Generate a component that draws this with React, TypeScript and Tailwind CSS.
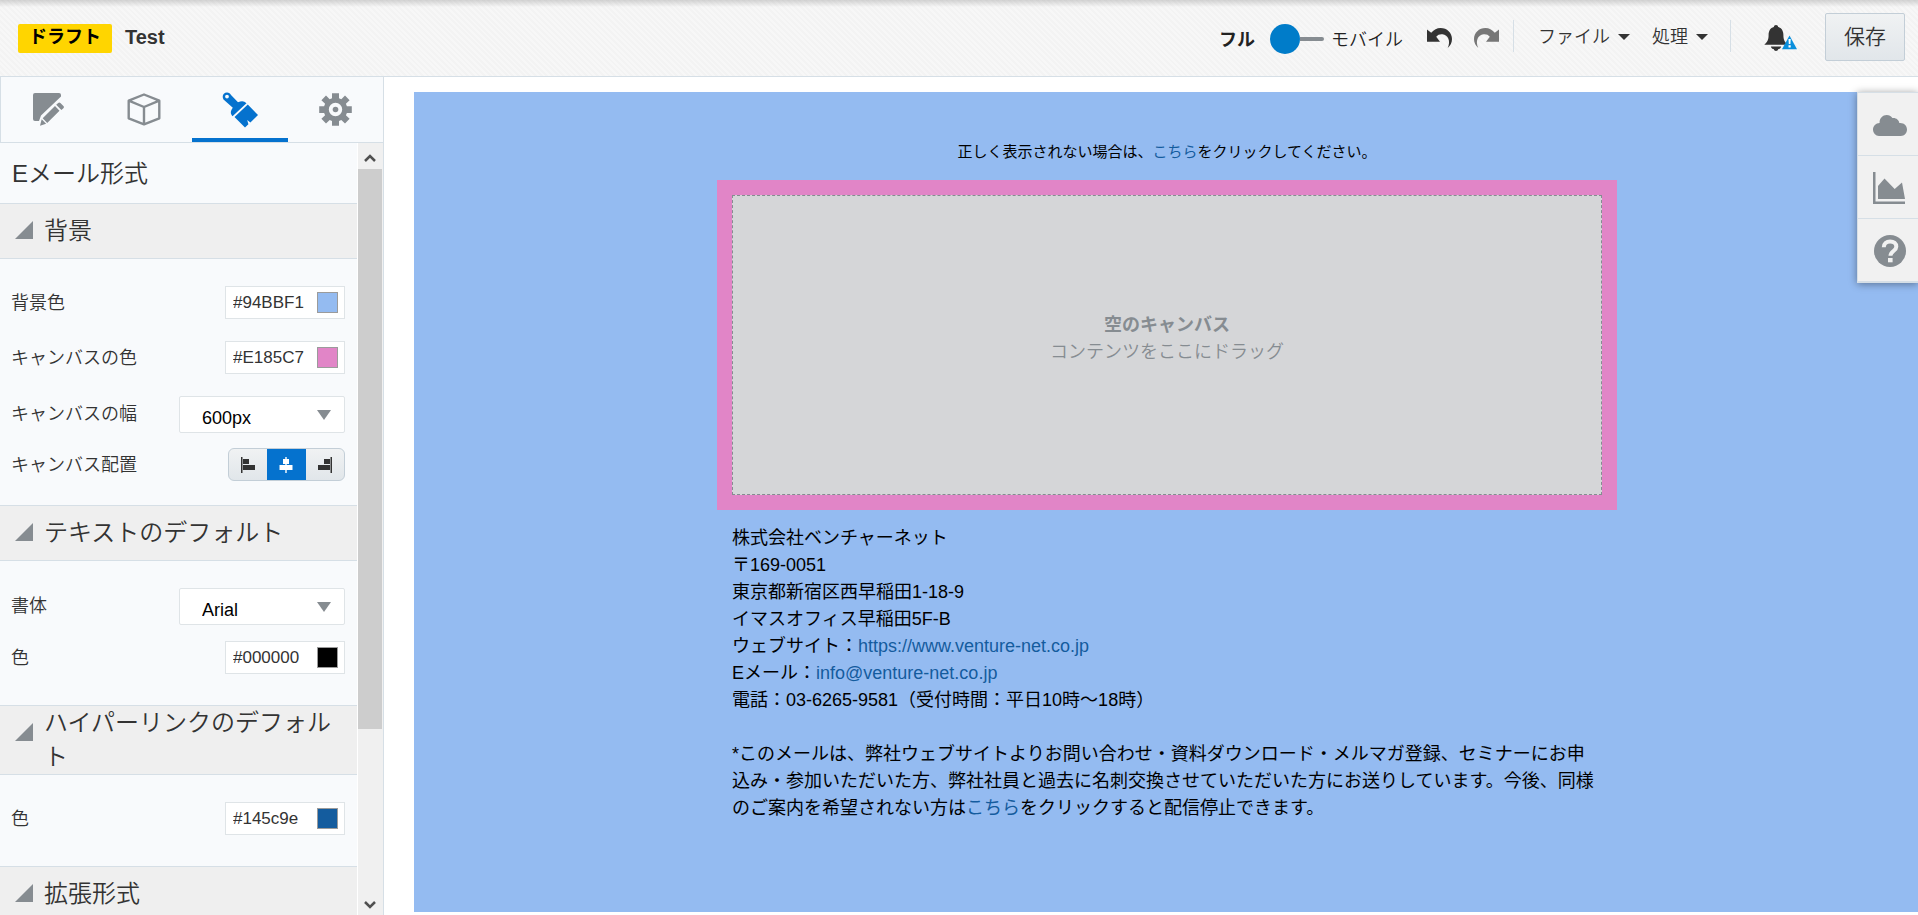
import { ReactNode, useState } from "react";

interface ColorFieldProps {
  id: string;
  label: string;
  value: string;
}

interface SelectFieldProps {
  id: string;
  label: string;
  options: string[];
}

interface SectionProps {
  title: string;
  children?: ReactNode;
}

const PencilIcon = () => (
  <svg width="32" height="33" viewBox="0 0 32 33" fill="currentColor" aria-hidden="true">
    <path d="M2 0h24a2 2 0 0 1 2 2v1.500L8 22.500 6 28H2a2 2 0 0 1-2-2V2a2 2 0 0 1 2-2z" />
    <path d="M9.700 25.200l12.300-12.200 4.500 4.700-12.300 12.200zM23.200 11.800l2-1.900c.7-.7 1.500-.7 2.200 0l3 3.200c.7.7.7 1.500 0 2.200l-2 1.800zM8.700 26.300l4.400 4.400L7 32.700z" />
  </svg>
);

const CubeIcon = () => (
  <svg width="34" height="33" viewBox="0 0 34 33" fill="none" stroke="currentColor" strokeWidth="2.400" strokeLinejoin="round" aria-hidden="true">
    <path d="M17 1.500l15.300 6.200v17.600L17 31.300 1.700 25.300V7.700zM1.700 7.700L17 14l15.300-6.300M17 14v17.300" />
  </svg>
);

const BrushIcon = () => (
  <svg width="36" height="36" viewBox="0 0 36 36" fill="currentColor" aria-hidden="true">
    <path fillRule="evenodd" d="M1.500 7.500C-.5 4 1.500.5 5 .5c2 0 3.300 1 4 2.600l7 7.200c3.500-1.700 6-1.700 8.500 1L10.500 24.200C8 21.500 8.500 19 10.800 15.800zM5 2.700a1.900 1.900 0 1 0 0 3.800 1.900 1.900 0 0 0 0-3.800z" />
    <path d="M25.800 12.600L36 23l-7.600 7.600-3.200-2.700 1.200 4.400L23 35.500 12.500 25z" />
  </svg>
);

const GearIcon = () => (
  <svg width="33" height="33" viewBox="-16.500 -16.500 33 33" fill="currentColor" aria-hidden="true">
    <path
      fillRule="evenodd"
      d="M-3.500-16.300h7v5l2.300 1 3.700-3.600 4.600 4.600-3.700 3.600 1 2.400h4.900v6.700h-4.900l-1 2.300 3.700 3.600-4.600 4.700-3.700-3.600-2.300 1v4.900h-7v-4.900l-2.300-1-3.700 3.600-4.600-4.700 3.700-3.600-1-2.300h-4.900v-6.700h4.900l1-2.400-3.700-3.600 4.600-4.600 3.700 3.600 2.300-1zM0-6.700A6.700 6.700 0 1 0 0 6.700 6.700 6.700 0 0 0 0-6.700z"
    />
    <circle r="2.800" />
  </svg>
);

const UndoIcon = ({ flip }: { flip?: boolean }) => (
  <svg width="25" height="20" viewBox="0 0 25 20" fill="currentColor" className={flip ? "-scale-x-100" : ""} aria-hidden="true">
    <path d="M0 1.500l4.200 3.300C7 1.800 10 0 13.500 0 20 0 25 4.800 25 11c0 3.500-1.500 6.500-4.300 9C24 13 21 7 15.500 6.300c-2.600-.3-4.700.5-6.300 2.400L13 13.800H0z" />
  </svg>
);

const BellIcon = () => (
  <svg width="33" height="27" viewBox="0 0 33 27" aria-hidden="true">
    <path d="M12 0c1.300 0 2 .8 2.200 2 3.400.9 5.200 4 5.200 8 0 4.800 1.300 7 4.300 9.800H.3C3.300 17 4.600 14.800 4.600 10c0-4 1.800-7.100 5.200-8C10 .8 10.700 0 12 0zM6.800 21.500h10.400c-.6 2-1.800 2.500-2.800 2.600-.4 1.200-1.300 1.900-2.400 1.900s-2-.7-2.400-1.900c-1-.1-2.200-.6-2.800-2.600z" fill="#333" />
    <path d="M25.500 10.500L33 24.300H18z" fill="#0a8fdc" />
    <path d="M24.500 14h2.200l-.3 5h-1.600zM24.500 20.300h2.200v2.200h-2.200z" fill="#fff" />
  </svg>
);

const CloudIcon = () => (
  <svg width="34" height="21" viewBox="0 0 34 21" fill="currentColor" aria-hidden="true">
    <path d="M6 21A6.300 6.300 0 0 1 0 14.500C0 11 2.800 8 6.600 8 6.300 3.500 9.500 0 13.700 0c2.500 0 4.400 1.100 5.700 3 3.300-.6 6.600 1.700 6.900 5C30.800 7.500 34 10.500 34 14.500c0 3.600-2.600 6.500-6.200 6.500z" />
  </svg>
);

const ChartIcon = () => (
  <svg width="33" height="32" viewBox="0 0 33 32" fill="currentColor" aria-hidden="true">
    <path d="M0 0h2.500v29.500H32V32H0zM5 27V14l6.500-7.500L21.700 17l7.300-6.500L32 27z" />
  </svg>
);

const HelpIcon = () => (
  <svg width="32" height="32" viewBox="0 0 32 32" aria-hidden="true">
    <circle cx="16" cy="16" r="16" fill="currentColor" />
    <path d="M9.800 12.300c0-3.800 2.600-5.800 6.300-5.800 3.800 0 6.200 2 6.200 5.200 0 4.300-5.800 4.300-5.800 9" fill="none" stroke="#f1f1f1" strokeWidth="4" />
    <path d="M14 23h4.600v4.300H14z" fill="#f1f1f1" />
  </svg>
);

const AlignLeftIcon = () => (
  <svg width="15" height="16" viewBox="0 0 15 16" fill="currentColor" aria-hidden="true">
    <path d="M0 0h1.500v16H0zM2 2h6v5H2zM2 8h12v5H2z" />
  </svg>
);

const AlignCenterIcon = () => (
  <svg width="14" height="16" viewBox="0 0 14 16" fill="currentColor" aria-hidden="true">
    <path d="M6.300 0h1.400v16H6.300zM4 2h6v5H4zM.5 8h13v5H.5z" />
  </svg>
);

const AlignRightIcon = () => (
  <svg width="15" height="16" viewBox="0 0 15 16" fill="currentColor" aria-hidden="true">
    <path d="M13.500 0H15v16h-1.500zM7 2h6v5H7zM1 8h12v5H1z" />
  </svg>
);

const Caret = () => (
  <svg width="12" height="6" viewBox="0 0 12 6" fill="currentColor" aria-hidden="true">
    <path d="M0 0h12L6 6z" />
  </svg>
);

const tabs = [
  { name: "編集", icon: <PencilIcon /> },
  { name: "ブロック", icon: <CubeIcon /> },
  { name: "スタイル", icon: <BrushIcon /> },
  { name: "設定", icon: <GearIcon /> },
];

const alignments = [
  { name: "左", icon: <AlignLeftIcon /> },
  { name: "中央", icon: <AlignCenterIcon /> },
  { name: "右", icon: <AlignRightIcon /> },
];

const tools = [
  { name: "クラウド", icon: <CloudIcon /> },
  { name: "レポート", icon: <ChartIcon /> },
  { name: "ヘルプ", icon: <HelpIcon /> },
];

const ColorField = ({ id, label, value }: ColorFieldProps) => {
  const [color, setColor] = useState(value);
  return (
    <div className="flex items-center justify-between">
      <label htmlFor={id}>{label}</label>
      <div className="flex h-[33px] w-[120px] items-center border border-[#dfe4e7] bg-white pl-[7px] pr-1.5">
        <input
          id={id}
          value={color}
          onChange={(e) => setColor(e.target.value)}
          className="min-w-0 flex-1 bg-transparent pt-0.5 text-[17px] outline-none"
        />
        <span className="size-[21px] border border-[#9b9b9b]" style={{ backgroundColor: color }} />
      </div>
    </div>
  );
};

const SelectField = ({ id, label, options }: SelectFieldProps) => {
  return (
    <div className="flex items-center justify-between">
      <label htmlFor={id} className="pb-0.5">{label}</label>
      <div className="grid w-[166px] items-center">
        <select
          id={id}
          className="col-start-1 row-start-1 h-[37px] appearance-none rounded-xs border border-[#dfe4e7] bg-white pl-[22px] pt-1.5 text-lg text-black"
        >
          {options.map((option) => (
            <option key={option}>{option}</option>
          ))}
        </select>
        <svg width="14" height="10" viewBox="0 0 14 10" className="pointer-events-none col-start-1 row-start-1 mr-3.5 justify-self-end" aria-hidden="true">
          <path d="M0 0h14L7 10z" fill="#868c91" />
        </svg>
      </div>
    </div>
  );
};

const Section = ({ title, children }: SectionProps) => {
  return (
    <section>
      <div className="flex min-h-[55px] items-start gap-[11px] border-b border-[#d6dfe6] bg-[#efefef] pl-[15px] pr-5">
        <svg width="18" height="18" viewBox="0 0 18 18" className="mt-[17px] shrink-0" aria-hidden="true">
          <path d="M18 0v18H0z" fill="#868c91" />
        </svg>
        <h2 className="self-center text-2xl leading-[34px] font-[350]">{title}</h2>
      </div>
      {children}
    </section>
  );
};

const Header = () => {
  return (
    <header className="flex h-[77px] shrink-0 items-start justify-between border-b border-[#d6dfe6] bg-[linear-gradient(#00000026,transparent_7px),repeating-linear-gradient(45deg,#f7f7f7_0_2px,#f3f3f3_2px_4px)] pl-[18px] pr-[13px] text-lg leading-7">
      <div className="flex gap-[13px] pt-6 font-bold">
        <span className="h-[29px] rounded-xs bg-[#ffd500] px-[11px] leading-[26px] text-black">ドラフト</span>
        <h1 className="text-xl leading-[26px]">Test</h1>
      </div>
      <div className="flex">
        <div className="flex items-center self-start pt-6 text-[#222]">
          <span className="pt-0.5 font-bold">フル</span>
          <button type="button" role="switch" aria-checked="false" aria-label="フル / モバイル" className="ml-[15px] flex items-center">
            <span className="size-[30px] rounded-full bg-[#007cc9]" />
            <span className="h-1 w-6 rounded-r-full bg-[#868c91]" />
          </button>
          <span className="ml-[7px] pt-0.5 font-[350]">モバイル</span>
        </div>
        <button type="button" aria-label="元に戻す" className="mt-7 ml-6 self-start text-[#333]"><UndoIcon /></button>
        <button type="button" aria-label="やり直し" className="mt-7 ml-[22px] self-start text-[#777]"><UndoIcon flip /></button>
        <nav className="mt-5 ml-3.5 flex h-8 gap-[22px] border-x border-[#d6dfe6] pr-[22px] pl-6 font-[350] text-[#333]">
          <button type="button" className="flex items-center gap-2 pt-px">ファイル<Caret /></button>
          <button type="button" className="flex items-center gap-2 pt-px">処理<Caret /></button>
        </nav>
        <button type="button" aria-label="通知" className="mt-[25px] ml-[33px] self-start"><BellIcon /></button>
        <button type="button" className="mt-[13px] ml-7 h-12 w-20 rounded-xs border border-[#c3ced7] bg-linear-to-b from-[#f0f2f3] to-[#e1e6ea] text-[21px] font-[350]">
          保存
        </button>
      </div>
    </header>
  );
};

const Sidebar = () => {
  return (
    <aside className="flex w-96 shrink-0 flex-col border-r border-[#d6dfe6] bg-[#f8fafc]">
      <div role="tablist" className="flex h-[66px] shrink-0 border-b border-l border-[#d6dfe6] text-[#868c91]">
        {tabs.map((tab, i) => (
          <button
            key={tab.name}
            type="button"
            role="tab"
            aria-selected={i === 2}
            aria-label={tab.name}
            className={
              i === 2
                ? "flex flex-1 items-center justify-center border-b-4 border-[#0572ce] pt-1 text-[#0572ce]"
                : "flex flex-1 items-center justify-center"
            }
          >
            {tab.icon}
          </button>
        ))}
      </div>
      <div className="flex min-h-0 flex-1">
        <div className="min-w-0 flex-1 overflow-hidden border-r border-white text-lg">
          <h2 className="border-b border-[#d6dfe6] px-3 pt-3.5 pb-3 text-2xl leading-[34px] font-[350]">Eメール形式</h2>
          <Section title="背景">
            <div className="flex flex-col gap-[22px] border-b border-[#d6dfe6] pt-[27px] pr-3 pb-6 pl-[11px] font-[350]">
              <ColorField id="background" label="背景色" value="#94BBF1" />
              <ColorField id="canvas-color" label="キャンバスの色" value="#E185C7" />
              <div className="flex flex-col gap-[15px]">
                <SelectField id="canvas-width" label="キャンバスの幅" options={["600px"]} />
                <div role="group" aria-labelledby="canvas-align" className="flex items-center justify-between">
                  <span id="canvas-align">キャンバス配置</span>
                  <div className="flex h-[33px] w-[117px] overflow-hidden rounded-md border border-[#c3ced7] bg-linear-to-b from-[#f0f2f3] to-[#e1e6ea] text-[#333]">
                    {alignments.map((item, i) => (
                      <button
                        key={item.name}
                        type="button"
                        aria-label={item.name}
                        aria-pressed={i === 1}
                        className={
                          i === 1
                            ? "-my-px flex flex-1 items-center justify-center bg-[#0572ce] text-white"
                            : "flex flex-1 items-center justify-center"
                        }
                      >
                        {item.icon}
                      </button>
                    ))}
                  </div>
                </div>
              </div>
            </div>
          </Section>
          <Section title="テキストのデフォルト">
            <div className="flex flex-col gap-4 border-b border-[#d6dfe6] pt-[27px] pr-3 pb-[31px] pl-[11px] font-[350]">
              <SelectField id="font" label="書体" options={["Arial"]} />
              <ColorField id="text-color" label="色" value="#000000" />
            </div>
          </Section>
          <Section title="ハイパーリンクのデフォルト">
            <div className="border-b border-[#d6dfe6] pt-[27px] pr-3 pb-[31px] pl-[11px] font-[350]">
              <ColorField id="link-color" label="色" value="#145c9e" />
            </div>
          </Section>
          <Section title="拡張形式" />
        </div>
        <div className="flex w-[25px] flex-col items-center bg-[#f0f0f0] pr-px text-[#505050]" aria-hidden="true">
          <svg width="12" height="26" viewBox="0 0 12 26" fill="none" stroke="currentColor" strokeWidth="2.500">
            <path d="M1 18l5-5 5 5" />
          </svg>
          <div className="w-full flex-[56] bg-[#cdcdcd]" />
          <div className="flex-[16]" />
          <svg width="12" height="26" viewBox="0 0 12 26" fill="none" stroke="currentColor" strokeWidth="2.500">
            <path d="M1 13l5 5 5-5" />
          </svg>
        </div>
      </div>
    </aside>
  );
};

const EmailCanvas = () => {
  return (
    <main className="relative flex min-w-0 flex-1 bg-white pt-[15px] pb-[3px] pl-[30px]">
      <div className="flex min-w-0 flex-1 flex-col items-center bg-[#94bbf1] pt-12 pl-0.5 text-black">
        <p className="text-[15px] leading-6">
          正しく表示されない場合は、<a href="#view" className="text-[#145c9e]">こちら</a>をクリックしてください。
        </p>
        <div className="mt-4 w-full max-w-[900px] bg-[#e185c7] p-[15px]">
          <div className="flex h-[300px] flex-col items-center justify-center border border-dashed border-[#868c91] bg-[#d5d6d8] pb-3 text-lg leading-[27px] text-[#868c91]">
            <strong>空のキャンバス</strong>
            <span className="font-[350]">コンテンツをここにドラッグ</span>
          </div>
        </div>
        <div className="w-full max-w-[900px] px-[15px] pt-[15px] text-lg leading-[27px]">
          <address className="not-italic">
            株式会社ベンチャーネット<br />
            〒169-0051<br />
            東京都新宿区西早稲田1-18-9<br />
            イマスオフィス早稲田5F-B<br />
            ウェブサイト：<a href="https://www.venture-net.co.jp" className="text-[#145c9e]">https://www.venture-net.co.jp</a><br />
            Eメール：<a href="mailto:info@venture-net.co.jp" className="text-[#145c9e]">info@venture-net.co.jp</a><br />
            電話：03-6265-9581（受付時間：平日10時～18時）
          </address>
          <p className="mt-[27px]">
            *このメールは、弊社ウェブサイトよりお問い合わせ・資料ダウンロード・メルマガ登録、セミナーにお申込み・参加いただいた方、弊社社員と過去に名刺交換させていただいた方にお送りしています。今後、同様のご案内を希望されない方は<a href="#unsubscribe" className="text-[#145c9e]">こちら</a>をクリックすると配信停止できます。
          </p>
        </div>
      </div>
      <div className="absolute top-[15px] right-0 flex w-[61px] flex-col border-b-2 border-l border-[#d6dfe6] bg-[#f1f1f1] text-[#868c91] shadow-[0_1px_8px_#00000066]">
        {tools.map((tool) => (
          <button key={tool.name} type="button" aria-label={tool.name} className="flex h-[63px] items-center justify-center border-t border-[#d6dfe6] pt-0.5 pl-[3px]">
            {tool.icon}
          </button>
        ))}
      </div>
    </main>
  );
};

const App = () => {
  return (
    <div lang="ja" className="flex h-screen flex-col overflow-hidden bg-white font-['Liberation_Sans','Noto_Sans_CJK_JP',sans-serif] text-[#333]">
      <Header />
      <div className="flex min-h-0 flex-1">
        <Sidebar />
        <EmailCanvas />
      </div>
    </div>
  );
};

export default App;
